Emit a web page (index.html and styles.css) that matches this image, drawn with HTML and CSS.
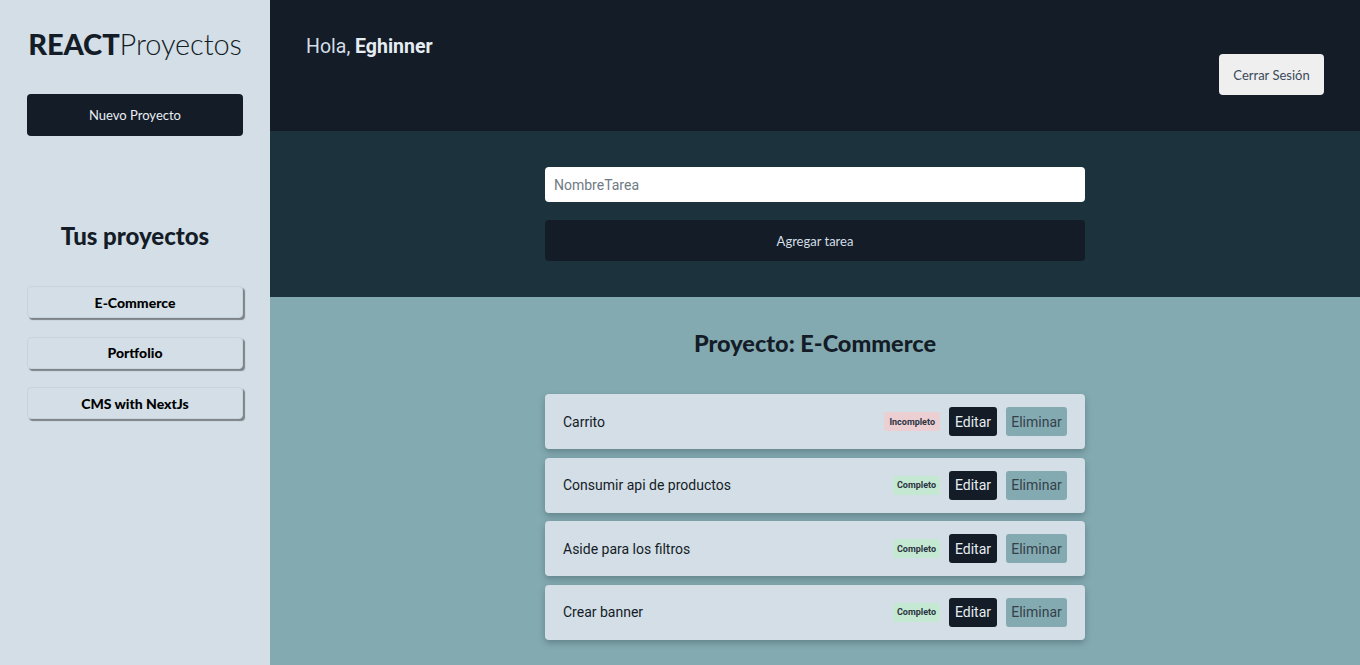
FILE: index.html
```html
<!DOCTYPE html>
<html lang="es">
<head>
<meta charset="utf-8">
<title>REACTProyectos</title>
<link rel="stylesheet" href="styles.css">
</head>
<body>
<div class="app">
  <aside class="sidebar">
    <h1 class="logo"><span class="logo-bold">REACT</span>Proyectos</h1>
    <button class="btn-new">Nuevo Proyecto</button>
    <h2 class="side-title">Tus proyectos</h2>
    <ul class="project-list">
      <li><button class="project-btn">E-Commerce</button></li>
      <li><button class="project-btn">Portfolio</button></li>
      <li><button class="project-btn">CMS with NextJs</button></li>
    </ul>
  </aside>
  <main class="main">
    <header class="topbar">
      <p class="greet">Hola, <strong>Eghinner</strong></p>
      <button class="btn-logout">Cerrar Sesión</button>
    </header>
    <section class="form-section">
      <form class="task-form">
        <input class="task-input" type="text" placeholder="NombreTarea">
        <button class="btn-add" type="button">Agregar tarea</button>
      </form>
    </section>
    <section class="list-section">
      <h2 class="list-title">Proyecto: E-Commerce</h2>
      <ul class="tasks">
        <li class="task">
          <span class="task-name">Carrito</span>
          <div class="task-actions">
            <span class="badge badge-no">Incompleto</span>
            <button class="btn-edit">Editar</button>
            <button class="btn-del">Eliminar</button>
          </div>
        </li>
        <li class="task">
          <span class="task-name">Consumir api de productos</span>
          <div class="task-actions">
            <span class="badge badge-ok">Completo</span>
            <button class="btn-edit">Editar</button>
            <button class="btn-del">Eliminar</button>
          </div>
        </li>
        <li class="task">
          <span class="task-name">Aside para los filtros</span>
          <div class="task-actions">
            <span class="badge badge-ok">Completo</span>
            <button class="btn-edit">Editar</button>
            <button class="btn-del">Eliminar</button>
          </div>
        </li>
        <li class="task">
          <span class="task-name">Crear banner</span>
          <div class="task-actions">
            <span class="badge badge-ok">Completo</span>
            <button class="btn-edit">Editar</button>
            <button class="btn-del">Eliminar</button>
          </div>
        </li>
      </ul>
    </section>
  </main>
</div>
</body>
</html>
```

FILE: styles.css
```css
* { box-sizing: border-box; }
html, body { margin: 0; padding: 0; height: 100%; }
body { font-family: Roboto, "Liberation Sans", sans-serif; background: #84aab1; overflow: hidden; }
button { font: inherit; cursor: pointer; }
ul { list-style: none; margin: 0; padding: 0; }

.app { display: flex; height: 665px; }

.sidebar {
  width: 270px;
  flex: none;
  background: #d3dee6;
  padding: 27px 27px 0;
  display: flex;
  flex-direction: column;
  font-family: Lato, "Open Sans", sans-serif;
}
.logo {
  margin: 0;
  text-align: center;
  font-size: 29px;
  font-weight: 300;
  color: #131c27;
  line-height: 33px;
  letter-spacing: -0.1px;
}
.logo-bold { font-weight: 900; }
.btn-new {
  margin-top: 34px;
  height: 42px;
  border: none;
  border-radius: 4px;
  background: #131c27;
  color: #e9eef3;
  font-size: 13px;
  font-family: Lato, sans-serif;
}
.side-title {
  margin: 86px 0 0;
  text-align: center;
  font-size: 24px;
  font-weight: 900;
  color: #131c27;
  line-height: 28px;
}
.project-list {
  margin-top: 36px;
  display: flex;
  flex-direction: column;
  gap: 18.5px;
}
.project-btn {
  width: 100%;
  height: 32px;
  border: 1px solid #c9d3dc;
  border-radius: 4px;
  background: #d3dee6;
  box-shadow: 2px 2px 1px #7c8389;
  font-size: 14px;
  font-weight: 900;
  color: #000;
  font-family: Lato, sans-serif;
}

.main { flex: 1; display: flex; flex-direction: column; }

.topbar {
  height: 131px;
  flex: none;
  background: #131c27;
  display: flex;
  justify-content: space-between;
  align-items: flex-start;
  padding: 0 36px 0 36px;
}
.greet {
  margin: 35px 0 0;
  font-size: 19.5px;
  color: #d3dee6;
  line-height: 24px;
}
.greet strong { font-weight: 700; color: #e6edf2; }
.btn-logout {
  margin-top: 54px;
  width: 105px;
  height: 41px;
  border: none;
  border-radius: 4px;
  background: #efefef;
  color: #3a4a5a;
  font-size: 13px;
  font-family: Lato, sans-serif;
}

.form-section {
  height: 166px;
  flex: none;
  background: #1c323d;
  display: flex;
  justify-content: center;
  padding-top: 36px;
}
.task-form { width: 540px; display: flex; flex-direction: column; gap: 18px; }
.task-input {
  height: 35px;
  border: none;
  border-radius: 4px;
  background: #fff;
  padding: 0 9px;
  font-family: Roboto, sans-serif;
  font-size: 14px;
  outline: none;
}
.task-input::placeholder { color: #6e7a84; }
.btn-add {
  height: 41px;
  border: none;
  border-radius: 4px;
  background: #131c27;
  color: #d3dee6;
  font-size: 13px;
  font-family: Lato, sans-serif;
}

.list-section {
  flex: 1;
  background: #84aab1;
  display: flex;
  flex-direction: column;
  align-items: center;
  padding-top: 31px;
}
.list-title {
  margin: 0;
  font-family: Lato, sans-serif;
  font-size: 23.5px;
  font-weight: 900;
  color: #131c27;
  line-height: 30px;
}
.tasks {
  margin-top: 36px;
  width: 540px;
  display: flex;
  flex-direction: column;
  gap: 8.5px;
}
.task {
  height: 55px;
  background: #d3dee6;
  border-radius: 4px;
  box-shadow: 0 3px 6px rgba(40, 60, 70, 0.35);
  display: flex;
  align-items: center;
  justify-content: space-between;
  padding: 0 18px;
}
.task-name { font-size: 14px; color: #131c27; }
.task-actions { display: flex; align-items: center; gap: 9px; }
.badge {
  height: 19px;
  padding: 0 5px;
  border-radius: 3px;
  font-size: 9px;
  font-weight: 700;
  color: #2a3440;
  display: flex;
  align-items: center;
}
.badge-no { background: #ebcfd3; }
.badge-ok { background: #c5e8d2; padding: 0 4px; }
.btn-edit {
  height: 29px;
  width: 48px;
  border: none;
  border-radius: 3px;
  background: #131c27;
  color: #e6edf2;
  font-size: 14px;
  padding: 0;
}
.btn-del {
  height: 29px;
  width: 61px;
  border: none;
  border-radius: 3px;
  background: #84aab1;
  color: #34414b;
  font-size: 14px;
  padding: 0;
}
```
